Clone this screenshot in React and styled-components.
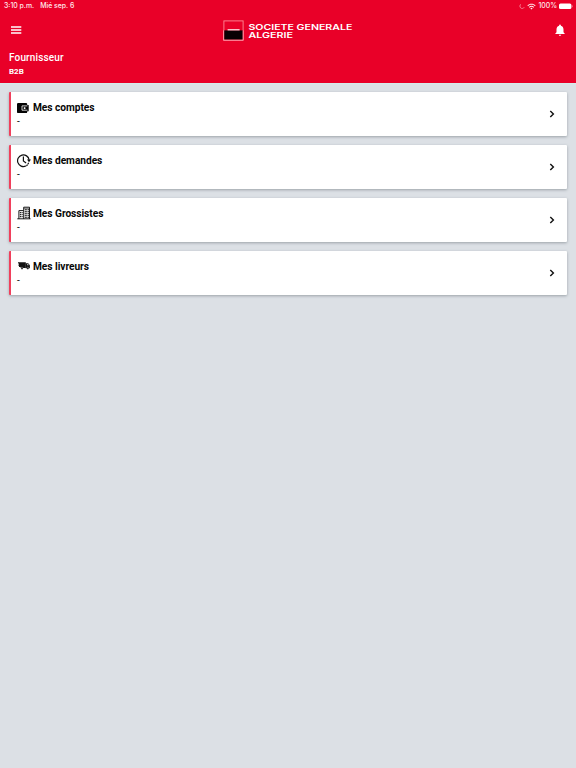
import styled, { createGlobalStyle } from 'styled-components'
import { MdNotifications, MdWifi } from 'react-icons/md'

const GlobalStyle = createGlobalStyle`
* {
    box-sizing: border-box;
}
body {
    margin: 0;
    background: #dce0e5;
    font-family: Roboto, "Liberation Sans", sans-serif;
}
`;

const Page = styled.div`
min-height: 100vh;
display: flex;
flex-direction: column;
`;

const Header = styled.header`
height: 83px;
background: #e90028;
color: white;
display: flex;
flex-direction: column;
box-shadow: 0 1px 1px #d5ebeb;
`;

const StatusBar = styled.div`
height: 12px;
padding: 0 3px 0 4px;
display: flex;
justify-content: space-between;
align-items: center;
font-family: Inter, sans-serif;
font-size: 6.9px;
font-weight: 500;
line-height: 12px;
color: #ffe9ec;
`;

const StatusGroup = styled.div`
display: flex;
align-items: center;
gap: ${(props) => props.$gap};
`;

const Toolbar = styled.div`
height: 36px;
padding: 0 9px;
display: flex;
justify-content: space-between;
align-items: center;
`;

const IconButton = styled.button`
width: 14px;
height: 14px;
padding: 0;
border: none;
background: none;
color: white;
display: flex;
align-items: center;
justify-content: center;
cursor: pointer;
`;

const Profile = styled.div`
padding: 3px 9px 0;
display: flex;
flex-direction: column;
`;

const ProfileName = styled.span`
font-size: 10px;
line-height: 13px;
font-weight: 500;
letter-spacing: 0.15px;
`;

const ProfileType = styled.span`
margin-top: 3px;
font-size: 8px;
line-height: 10px;
font-weight: 700;
`;

const CardList = styled.main`
padding: 9.4px 9px;
display: flex;
flex-direction: column;
gap: 9px;
`;

const Card = styled.section`
height: 43.8px;
padding: 7.9px 8px 0 6px;
display: flex;
justify-content: space-between;
background: white;
border-left: 2px solid #f03f5c;
border-radius: 1px;
box-shadow: 0 1px 3px rgba(60, 70, 80, 0.4);
cursor: pointer;
`;

const CardTitle = styled.h2`
height: 15px;
margin: 0;
display: flex;
align-items: center;
font-size: 10.2px;
line-height: 15px;
letter-spacing: -0.05px;
font-weight: 700;
color: #080808;
`;

const IconBox = styled.span`
width: 16px;
height: 14px;
display: flex;
align-items: center;
`;

const CardText = styled.p`
margin: 0;
font-size: 10px;
line-height: 13px;
color: #111;
`;

const ArrowIcon = styled.svg`
width: 14px;
height: 14px;
margin-top: 7px;
fill: none;
stroke: #111;
stroke-width: 1.4;
`;

const Logo = () => (
    <svg width="131" height="21" viewBox="0 0 131 21">
        <rect x="0.9" y="0.9" width="19.2" height="19" fill="#e90028" stroke="#ff8a98" strokeWidth="0.9" />
        <path d="M1.3 10.4h18.4v9.1H1.3z" fill="#080003" />
        <path d="M0.5 10.4v10h19.7v-10" fill="none" stroke="#ff9cab" strokeWidth="0.8" />
        <path d="M4.6 9.2h12v1.2h-12z" fill="#fff3f4" />
        <g fill="white" fontFamily="Inter, sans-serif" fontWeight="600" fontSize="7.8">
            <text x="25.4" y="9.6" textLength="104" lengthAdjust="spacingAndGlyphs">SOCIETE GENERALE</text>
            <text x="25.4" y="17.7" textLength="44.5" lengthAdjust="spacingAndGlyphs">ALGERIE</text>
        </g>
    </svg>
)

const MenuIcon = () => (
    <svg width="12" height="8" viewBox="0 0 12 8" stroke="white" strokeWidth="1.3">
        <path d="M1 1h10.3M1 4h10.3M1 7h10.3" />
    </svg>
)

const Spinner = () => (
    <svg width="6" height="7" viewBox="0 0 6 7" fill="none" stroke="white" strokeWidth="0.8" opacity="0.6">
        <path d="M2 1.2A2.3 2.3 0 1 0 5.2 4.3" />
    </svg>
)

const Battery = () => (
    <svg width="14" height="7" viewBox="0 0 14 7">
        <rect x="0" y="0.6" width="12.4" height="5.4" rx="1.5" fill="white" />
        <path d="M13.3 2.4v1.8" stroke="white" strokeOpacity="0.6" strokeWidth="0.7" />
    </svg>
)

const WalletIcon = () => (
    <svg width="12" height="12" viewBox="0 0 12 12">
        <rect x="0" y="0.9" width="10.2" height="10.2" rx="1.2" fill="#050505" />
        <rect x="3.9" y="2.9" width="7.6" height="6.4" rx="0.5" fill="#050505" />
        <path d="M11 3.9H5v4.3h6" fill="none" stroke="white" strokeWidth="0.8" />
        <path d="M10.9 3v6.2" stroke="#050505" strokeWidth="1" />
        <rect x="6.7" y="5.2" width="1.8" height="1.7" rx="0.6" fill="white" />
    </svg>
)

const ClockIcon = () => (
    <svg width="14" height="14" viewBox="0 0 14 14" fill="none" stroke="#111" strokeWidth="1.2">
        <path d="M8.8 12A5.8 5.8 0 1 1 12.1 5.8" />
        <path d="M11.6 8.8A5.8 5.8 0 0 1 8.8 12" strokeDasharray="1.6 0.4" />
        <path d="M6.4 2.6v4.3l2.7 2" />
        <path d="M10 5.6h4l-2 2.7z" fill="#111" stroke="none" />
    </svg>
)

const BuildingIcon = () => (
    <svg width="14" height="14" viewBox="0 0 14 14" fill="none" stroke="#1a1a1a" strokeWidth="1">
        <path d="M0.3 12.8h13.2M1.9 13V4.6h4.6M6.7 13V1.2h5.8V13" />
        <path d="M3.4 6v6M5.1 6v6" strokeDasharray="1.3 0.7" strokeWidth="1.1" />
        <path d="M8.3 3v9M9.8 3v9M11.3 3v9" strokeDasharray="1.4 0.6" strokeWidth="1" />
        <path d="M6.7 2.3h6" strokeWidth="0.6" />
    </svg>
)

const TruckIcon = () => (
    <svg width="14" height="12" viewBox="0 0 14 12" fill="#111">
        <path d="M1 2.2h7.8v5.9H4.2L3 7H2V5.7H1.4V4.5H2V3.4H1z" />
        <path d="M8.7 3.2h2.5l1.7 2v3H8.7z" />
        <path d="M10 4h1.1l.8 1.3H10z" fill="#aaa" />
        <circle cx="5" cy="8.3" r="1.1" stroke="white" strokeWidth="0.3" />
        <circle cx="10.8" cy="8.3" r="1.1" stroke="white" strokeWidth="0.3" />
    </svg>
)

const items = [
    { title: 'Mes comptes', text: '-', Icon: WalletIcon },
    { title: 'Mes demandes', text: '-', Icon: ClockIcon },
    { title: 'Mes Grossistes', text: '-', Icon: BuildingIcon },
    { title: 'Mes livreurs', text: '-', Icon: TruckIcon },
]

const MenuCard = ({ title, text, Icon }) => (
    <Card>
        <div>
            <CardTitle><IconBox><Icon /></IconBox>{title}</CardTitle>
            <CardText>{text}</CardText>
        </div>
        <ArrowIcon viewBox="0 0 14 14"><path d="M5.3 3.9l3.1 3.1-3.1 3.1" /></ArrowIcon>
    </Card>
)

const App = () => {
    return (
        <Page>
            <GlobalStyle />
            <Header>
                <StatusBar>
                    <StatusGroup $gap="6px"><span>3:10 p.m.</span><span>Mié sep. 6</span></StatusGroup>
                    <StatusGroup $gap="2px"><Spinner /><MdWifi size={9} /><span>100%</span><Battery /></StatusGroup>
                </StatusBar>
                <Toolbar>
                    <IconButton aria-label="Menu"><MenuIcon /></IconButton>
                    <Logo />
                    <IconButton aria-label="Notifications"><MdNotifications size={14} /></IconButton>
                </Toolbar>
                <Profile>
                    <ProfileName>Fournisseur</ProfileName>
                    <ProfileType>B2B</ProfileType>
                </Profile>
            </Header>
            <CardList>
                {items.map((item) => <MenuCard key={item.title} {...item} />)}
            </CardList>
        </Page>
    )
}

export default App
